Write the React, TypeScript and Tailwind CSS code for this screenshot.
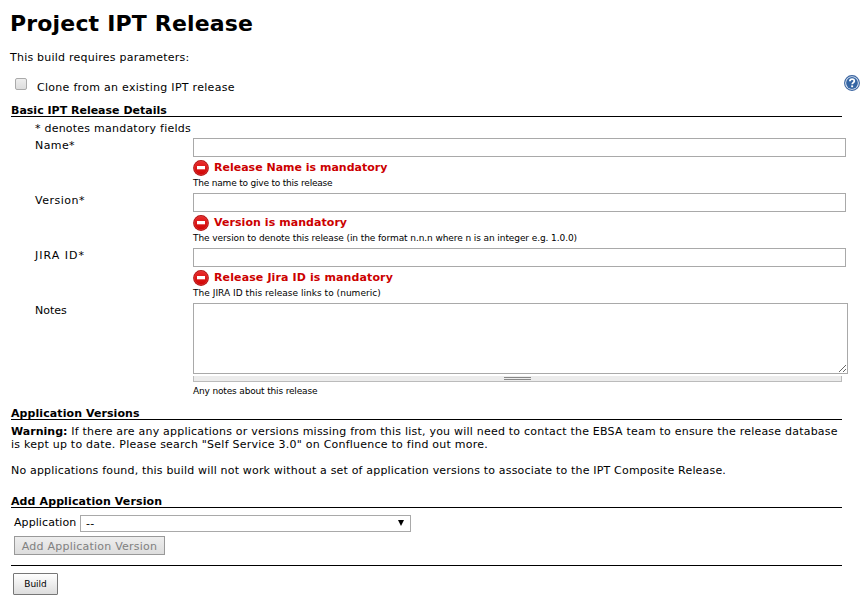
import React from "react";

function StopIcon() {
  return (
    <svg width="16" height="16" viewBox="0 0 16 16" className="shrink-0">
      <defs>
        <linearGradient id="stop" x1="0" y1="0" x2="0" y2="1">
          <stop offset="0" stopColor="#ea2a2a" />
          <stop offset="1" stopColor="#cf0505" />
        </linearGradient>
      </defs>
      <circle cx="8" cy="8" r="7.9" fill="#b50f0f" />
      <circle cx="8" cy="8" r="6.7" fill="url(#stop)" stroke="#e04a4a" strokeWidth="0.5" />
      <rect x="4" y="6" width="8" height="3.3" fill="#fff" />
    </svg>
  );
}

function HelpIcon() {
  return (
    <svg width="16" height="16" viewBox="0 0 16 16" className="block">
      <circle cx="8" cy="8" r="7.4" fill="#e4ecf6" stroke="#3a64a0" strokeWidth="1.1" />
      <circle cx="8" cy="8" r="5.9" fill="#3465a4" />
      <path d="M5.9 6.2c0-2.8 4.4-2.7 4.4-.3 0 1.7-2.1 1.7-2.1 3.4" fill="none" stroke="#fff" strokeWidth="1.8" />
      <rect x="7.2" y="10.4" width="1.9" height="1.8" fill="#fff" />
    </svg>
  );
}

function Heading({ children, className }: { children: React.ReactNode; className: string }) {
  return <h2 className={`ml-[11px] h-[13px] w-[831px] border-b border-black text-[11px] font-bold leading-[13px] ${className}`}>{children}</h2>;
}

type FieldProps = { label: string; error: string; hint: string; labelClass: string; errorClass: string; hintClass: string };

function Field({ label, error, hint, labelClass, errorClass, hintClass }: FieldProps) {
  return (
    <div className="flex h-[55px]">
      <label className={`w-[193px] pl-[35px] leading-[15px] ${labelClass}`}>{label}</label>
      <div>
        <input type="text" aria-label={label} className="block h-[19px] w-[653px] border border-[#a9a9a9] bg-white px-1" />
        <div className={`mt-[3px] flex h-4 items-center gap-[5px] font-bold leading-4 text-[#cc0000] ${errorClass}`}><StopIcon /><span className="-mt-px">{error}</span></div>
        <div className={`mt-px whitespace-nowrap text-[9px] leading-[13px] ${hintClass}`}>{hint}</div>
      </div>
    </div>
  );
}

export default function App() {
  return (
    <main className="h-[613px] w-[867px] overflow-hidden bg-white font-['DejaVu_Sans',Verdana,sans-serif] text-[11px] leading-[13px] tracking-[0.2px] text-black">
      <h1 className="ml-[10px] pt-[10px] text-[22px] font-bold leading-7 tracking-[0.17px]">Project IPT Release</h1>
      <p className="ml-[10px] mt-[13px] tracking-[0.23px]">This build requires parameters:</p>
      <div className="mt-[11px] flex h-[29px] justify-between pl-[15px] pr-[7px]">
        <label className="flex">
          <input type="checkbox" className="mt-[3px] h-[12px] w-[12px] appearance-none rounded-[2px] border border-[#aaa] bg-linear-to-b from-[#eee] to-[#ddd]" />
          <span className="ml-[10px] mt-[6px] tracking-[0.29px]">Clone from an existing IPT release</span>
        </label>
        <HelpIcon />
      </div>
      <Heading className="tracking-normal">Basic IPT Release Details</Heading>
      <p className="ml-[35px] mt-[5px] h-[16px] leading-[14px] tracking-[0.23px]">* denotes mandatory fields</p>
      <Field label="Name*" error="Release Name is mandatory" hint="The name to give to this release" labelClass="tracking-[0.4px]" errorClass="tracking-normal" hintClass="tracking-[-0.2px]" />
      <Field label="Version*" error="Version is mandatory" hint="The version to denote this release (in the format n.n.n where n is an integer e.g. 1.0.0)" labelClass="tracking-[0.5px]" errorClass="tracking-[0.06px]" hintClass="tracking-[-0.09px]" />
      <Field label="JIRA ID*" error="Release Jira ID is mandatory" hint="The JIRA ID this release links to (numeric)" labelClass="tracking-[1px]" errorClass="tracking-[0.12px]" hintClass="tracking-[0.03px]" />
      <div className="flex h-[104px]">
        <label className="w-[193px] pl-[35px] leading-[15px] tracking-normal">Notes</label>
        <div>
          <textarea aria-label="Notes" className="block h-[71px] w-[655px] resize border border-[#a9a9a9]" />
          <div className="mt-[2px] flex h-[6px] w-[649px] items-start justify-center border border-t-0 border-[#bbb] bg-[#ececec] pt-px">
            <div className="h-[3px] w-[27px] border-y border-[#888]" />
          </div>
          <p className="mt-[2px] text-[9px] leading-[14px] tracking-[-0.16px]">Any notes about this release</p>
        </div>
      </div>
      <Heading className="tracking-[0.08px]">Application Versions</Heading>
      <p className="ml-[11px] mt-[5px] whitespace-nowrap tracking-[0.217px]"><b className="tracking-[0.02px]">Warning:</b> If there are any applications or versions missing from this list, you will need to contact the EBSA team to ensure the release database<br /><span className="tracking-[0.235px]">is kept up to date. Please search "Self Service 3.0" on Confluence to find out more.</span></p>
      <p className="mb-[18px] ml-[11px] mt-[13px] tracking-[0.178px]">No applications found, this build will not work without a set of application versions to associate to the IPT Composite Release.</p>
      <Heading className="tracking-[0.11px]">Add Application Version</Heading>
      <div className="ml-[14px] mt-[7px] flex h-[17px]">
        <span className="w-[66px] pt-px tracking-[0.08px]">Application</span>
        <button className="flex h-[17px] w-[331px] items-center justify-between border border-[#a9a9a9] bg-white pl-[5px] pr-[6px]">
          <span>--</span>
          <svg width="6" height="6" viewBox="0 0 6 6" className="mb-[2px]"><path d="M0 0H6L3 6Z" fill="#000" /></svg>
        </button>
      </div>
      <button className="ml-[14px] mt-[4px] block h-[19px] w-[151px] border border-[#999] bg-linear-to-b from-[#eee] to-[#ddd] pt-px leading-[15px] text-[#808080] tracking-[0.23px]">Add Application Version</button>
      <div className="ml-[11px] mt-[10px] w-[831px] border-t border-black" />
      <button className="ml-[13px] mt-[7px] block h-[22px] w-[45px] rounded-[1px] border border-[#777] bg-linear-to-b from-white to-[#ddd] text-[9px] tracking-normal">Build</button>
    </main>
  );
}
